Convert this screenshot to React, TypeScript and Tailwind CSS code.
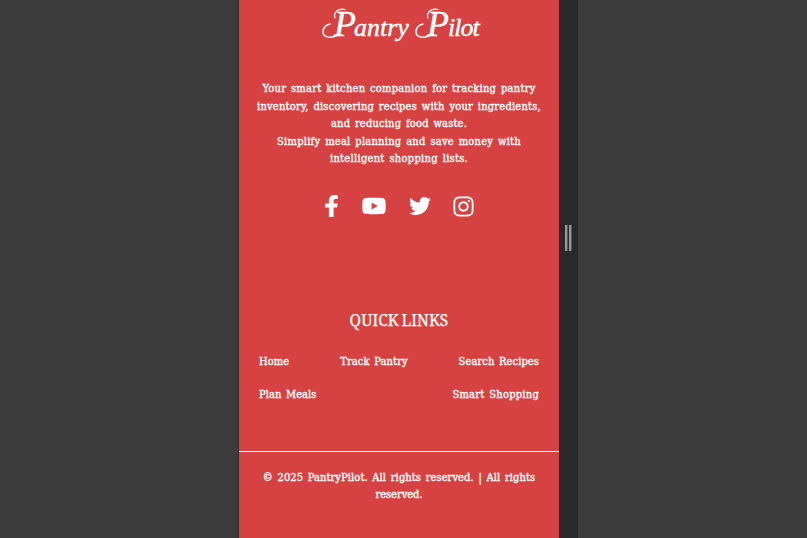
import { FaFacebookF, FaTwitter, FaYoutube, FaInstagram } from "react-icons/fa";

const slab = "font-['DejaVu_Serif_Condensed','DejaVu_Serif',serif] [font-stretch:condensed] text-[11px] leading-[17.5px] text-white whitespace-nowrap [word-spacing:1.4px] [-webkit-text-stroke:0.35px_white]";

function Swash() {
  return (
    <svg className="absolute top-[5px] left-[-12px] h-[34px] w-[30px]" viewBox="0 0 30 34" fill="none" stroke="white" strokeLinecap="round">
      <path d="M17 29 C11 34 1 33 1 27 C1 23 4 20 8 19" strokeWidth="1.5" />
      <path d="M13 13 C11 8 16 3 23 4.5" strokeWidth="1.2" />
    </svg>
  );
}

export default function App() {
  return (
    <div className="flex h-[538px] w-full overflow-hidden bg-[#3b3b3b]">
      <div className="w-[239px] shrink-0 border-r border-[#2b2b2b]" />
      <footer className="flex w-80 shrink-0 flex-col bg-[#d64242] text-white">
        <h1 className="flex h-[79px] items-baseline whitespace-nowrap pl-[95px] font-['Liberation_Serif',serif] text-[26px] leading-[48px] italic [-webkit-text-stroke:0.4px_white]">
          <span className="relative w-[20px] text-[36px]"><Swash />P</span>
          <span className="w-[73px]">antry</span>
          <span className="relative w-[21px] text-[36px]"><Swash />P</span>
          <span className="tracking-[-1px]">ilot</span>
        </h1>
        <div className={`flex flex-col items-center pt-px ${slab}`}>
          <span className="tracking-[0.26px]">Your smart kitchen companion for tracking pantry</span>
          <span className="tracking-[0.23px]">inventory, discovering recipes with your ingredients,</span>
          <span className="tracking-[0.2px]">and reducing food waste.</span>
          <span className="tracking-[0.26px]">Simplify meal planning and save money with</span>
          <span className="tracking-[0.3px]">intelligent shopping lists.</span>
        </div>
        <div className="mt-[26.5px] flex h-6 items-center pl-[85px]">
          <FaFacebookF className="h-[22px] w-[15px]" preserveAspectRatio="none" />
          <FaYoutube className="ml-[22px] h-[22px] w-[26px]" />
          <FaTwitter className="ml-[22px] size-[22px]" />
          <FaInstagram className="ml-[21px] size-[23px]" />
        </div>
        <h2 className="mt-[89.5px] text-center font-['Noto_Serif','Liberation_Serif',serif] text-[15.5px] leading-6 tracking-[0.1px] [word-spacing:-1.5px] [-webkit-text-stroke:0.25px_white]">QUICK LINKS</h2>
        <nav className={`mt-[21px] flex flex-col gap-4 px-5 ${slab}`}>
          <div className="flex justify-between">
            <a className="tracking-[0.12px]">Home</a>
            <a className="tracking-[0.12px]">Track Pantry</a>
            <a className="tracking-[0.1px]">Search Recipes</a>
          </div>
          <div className="flex justify-between">
            <a className="tracking-[0.06px]">Plan Meals</a>
            <a className="tracking-[0.26px]">Smart Shopping</a>
          </div>
        </nav>
        <div className={`mt-[47px] flex flex-col items-center border-t border-white pt-[17px] ${slab}`}>
          <span className="tracking-[0.1px]">© 2025 PantryPilot. All rights reserved. | All rights</span>
          <span>reserved.</span>
        </div>
      </footer>
      <div className="flex w-[19px] shrink-0 items-start gap-px bg-[#292929] pt-[225px] pl-[6px]">
        <i className="h-[26px] w-[3px] border-r border-[#555] bg-[#999]" />
        <i className="h-[26px] w-[3px] border-r border-[#555] bg-[#999]" />
      </div>
    </div>
  );
}
